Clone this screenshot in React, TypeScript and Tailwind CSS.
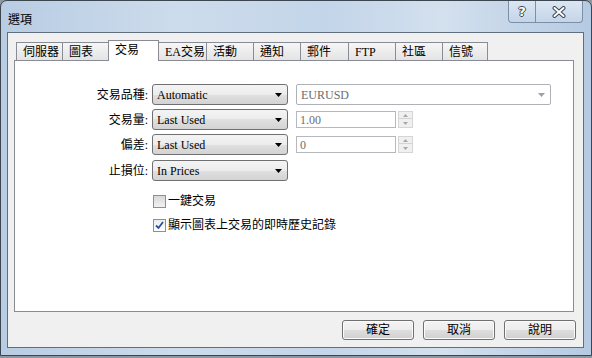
import React from "react";

const cjk = "font-['Liberation_Serif','Noto_Sans_CJK_TC','Noto_Sans_CJK_SC',serif]";
const serif = "font-['Liberation_Serif',serif]";

const tabs = [
  { label: "伺服器", w: "w-[47px]" },
  { label: "圖表", w: "w-[47px]" },
  { label: "交易", w: "w-[51px]", active: true },
  { label: "EA交易", w: "w-[49px]" },
  { label: "活動", w: "w-[48px]" },
  { label: "通知", w: "w-[48px]" },
  { label: "郵件", w: "w-[49px]" },
  { label: "FTP", w: "w-[48px]" },
  { label: "社區", w: "w-[48px]" },
  { label: "信號", w: "w-[46px]" },
];

function Dropdown({ value }: { value: string }) {
  return (
    <div className="w-[136px] h-[21px] rounded-[3px] border border-[#707070] bg-[linear-gradient(to_bottom,#f4f4f4_0%,#ececec_50%,#e0e0e0_50%,#d3d3d3_100%)] flex items-center justify-between pl-[4px] pr-[5px]">
      <span className={`${serif} text-[12px] leading-none text-black`}>{value}</span>
      <svg width="7" height="4" viewBox="0 0 7 4">
        <path d="M0 0h7L3.5 4z" fill="#000" />
      </svg>
    </div>
  );
}

function Spinner({ value }: { value: string }) {
  return (
    <div className="flex items-center gap-[2px]">
      <div className={`w-[100px] h-[17px] border border-[#b5b8bd] bg-white flex items-center pl-[3px] ${serif} text-[12px] leading-none text-[#6d6d6d]`}>
        {value}
      </div>
      <div className="w-[15px] h-[17px] flex flex-col">
        <div className="h-[8px] border border-[#d5d5d5] bg-[#f0f0f0] flex items-center justify-center">
          <svg width="5" height="3" viewBox="0 0 5 3">
            <path d="M0 3h5L2.5 0z" fill="#a8a8a8" />
          </svg>
        </div>
        <div className="h-[9px] border border-t-0 border-[#d5d5d5] bg-[#f0f0f0] flex items-center justify-center">
          <svg width="5" height="3" viewBox="0 0 5 3">
            <path d="M0 0h5L2.5 3z" fill="#a8a8a8" />
          </svg>
        </div>
      </div>
    </div>
  );
}

function Checkbox({ checked, label }: { checked?: boolean; label: string }) {
  return (
    <div className="flex items-center h-[16px] gap-[2px]">
      <div
        className={`w-[13px] h-[13px] border border-[#8f8f8f] flex items-center justify-center ${
          checked
            ? "bg-[linear-gradient(to_bottom,#e8ecf2,#ffffff)]"
            : "bg-[linear-gradient(to_bottom,#d8d8d8,#f2f2f2)]"
        }`}
      >
        {checked && (
          <svg width="9" height="9" viewBox="0 0 9 9">
            <path d="M1 4.5L3.5 7L8 1" fill="none" stroke="#2b4f91" strokeWidth="1.8" />
          </svg>
        )}
      </div>
      <span className={`${cjk} text-[12px] leading-none text-black`}>{label}</span>
    </div>
  );
}

function FieldRow({ label, children }: { label: string; children: React.ReactNode }) {
  return (
    <div className="flex items-center h-[21px] gap-[4px]">
      <div className={`w-[133px] text-right ${cjk} text-[12px] leading-none text-black`}>{label}:</div>
      {children}
    </div>
  );
}

function Button({ label }: { label: string }) {
  return (
    <button className="w-[72px] h-[20px] rounded-[3px] border border-[#707070] bg-[linear-gradient(to_bottom,#f4f4f4_0%,#ececec_50%,#dedede_50%,#d0d0d0_100%)] shadow-[inset_0_0_0_1px_#fbfbfb] flex items-center justify-center">
      <span className={`${cjk} text-[12px] leading-none text-black`}>{label}</span>
    </button>
  );
}

export default function App() {
  return (
    <div className="w-[592px] h-[358px] bg-[#8e979f] overflow-hidden">
      <div className="w-[592px] h-[356px] rounded-t-[7px] border border-[#3c4650] bg-[linear-gradient(to_right,#b8cce3_0%,#cddcec_30%,#c3d5e9_55%,#d3e0ee_75%,#b5cae2_100%)] flex flex-col pl-[6px] pr-[7px] pb-[7px]">
        {/* Title bar */}
        <div className="h-[31px] flex justify-between items-start">
          <div className={`pl-[1px] pt-[12px] ${cjk} text-[12px] leading-[14px] text-black`}>選項</div>
          <div className="flex mr-[1px]">
            <div className="w-[28px] h-[22px] rounded-bl-[4px] border border-t-0 border-[#7d8fa6] bg-[linear-gradient(to_bottom,#dbe6f2,#c4d5e9)] flex items-center justify-center">
              <span className="font-['DejaVu_Sans',sans-serif] font-bold text-[13px] leading-none text-white [text-shadow:1px_0_0_#3b4554,-1px_0_0_#3b4554,0_1px_0_#3b4554,0_-1px_0_#3b4554]">?</span>
            </div>
            <div className="w-[47px] h-[22px] rounded-br-[4px] border border-t-0 border-l-0 border-[#7d8fa6] bg-[linear-gradient(to_bottom,#dbe6f2,#c4d5e9)] flex items-center justify-center">
              <svg width="14" height="12" viewBox="0 0 14 12">
                <path d="M2.5 2L11.5 10M11.5 2L2.5 10" stroke="#3b4554" strokeWidth="4" strokeLinecap="round" />
                <path d="M2.5 2L11.5 10M11.5 2L2.5 10" stroke="#ffffff" strokeWidth="2" strokeLinecap="round" />
              </svg>
            </div>
          </div>
        </div>

        {/* Client area */}
        <div className="flex-1 border border-[#5f6d7c] bg-[#f0f0f0] flex flex-col pl-[6px]">
          {/* Tabs */}
          <div className="h-[20px] mt-[7px] ml-[2px] flex items-end">
            {tabs.map((t) =>
              t.active ? (
                <div
                  key={t.label}
                  className={`${t.w} h-[21px] -mb-px -ml-px z-10 border border-b-0 border-[#898c95] bg-white pl-[6px] pt-[3px] ${cjk} text-[12px] leading-none text-black`}
                >
                  {t.label}
                </div>
              ) : (
                <div
                  key={t.label}
                  className={`${t.w} h-[18px] -ml-px first:ml-0 border border-b-0 border-[#898c95] bg-[linear-gradient(to_bottom,#f6f6f6,#e4e4e4)] pl-[6px] pt-[3px] ${cjk} text-[12px] leading-none text-black`}
                >
                  {t.label}
                </div>
              )
            )}
          </div>

          {/* Panel */}
          <div className="w-[560px] h-[252px] border border-[#898c95] bg-white flex flex-col pt-[23px]">
            <div className="flex flex-col gap-[4px]">
              <FieldRow label="交易品種">
                <Dropdown value="Automatic" />
                <div className="ml-[4px] w-[255px] h-[21px] border border-[#aeb2b6] rounded-[2px] bg-white flex items-center justify-between pl-[4px] pr-[5px]">
                  <span className={`${serif} text-[12px] leading-none text-[#6d6d6d]`}>EURUSD</span>
                  <svg width="7" height="4" viewBox="0 0 7 4">
                    <path d="M0 0h7L3.5 4z" fill="#a0a0a0" />
                  </svg>
                </div>
              </FieldRow>
              <FieldRow label="交易量">
                <Dropdown value="Last Used" />
                <div className="ml-[4px]">
                  <Spinner value="1.00" />
                </div>
              </FieldRow>
              <FieldRow label="偏差">
                <Dropdown value="Last Used" />
                <div className="ml-[4px]">
                  <Spinner value="0" />
                </div>
              </FieldRow>
              <div className="mt-[1px]">
                <FieldRow label="止損位">
                  <Dropdown value="In Prices" />
                </FieldRow>
              </div>
            </div>
            <div className="mt-[12px] pl-[138px] flex flex-col gap-[8px]">
              <Checkbox label="一鍵交易" />
              <Checkbox checked label="顯示圖表上交易的即時歷史記錄" />
            </div>
          </div>

          {/* Buttons */}
          <div className="mt-[8px] pr-[7px] flex justify-end gap-[9px]">
            <Button label="確定" />
            <Button label="取消" />
            <Button label="說明" />
          </div>
        </div>
      </div>
    </div>
  );
}
